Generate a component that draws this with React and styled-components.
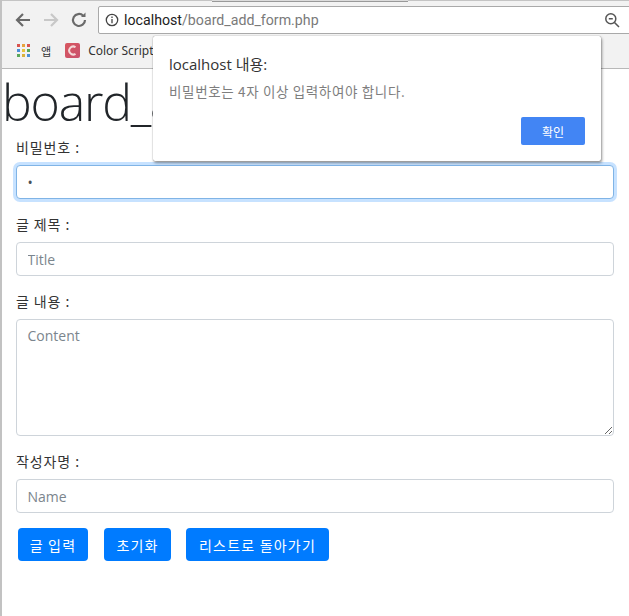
import React from "react";
import styled, { createGlobalStyle } from "styled-components";

const Global = createGlobalStyle`
  html, body { margin: 0; padding: 0; background: #fff; }
  body { width: 629px; height: 616px; overflow: hidden; font-family: "Open Sans", "Noto Sans CJK KR", sans-serif; }
  * { box-sizing: border-box; }
`;

const Shell = styled.div`
  position: relative;
  width: 629px;
  height: 616px;
  overflow: hidden;
  background: #fff;
  border-left: 2px solid #c2c2c2;
`;
const Toolbar = styled.div`
  height: 36px;
  background: #f2f2f2;
  display: flex;
  align-items: center;
  padding: 3px 0 0 12px;
  gap: 10px;
  border-top: 1px solid #c4c4c4;
`;
const NavButton = styled.svg`
  width: 18px;
  height: 18px;
  flex: none;
  fill: none;
  stroke: ${p => (p.$off ? "#c8c8c8" : "#6a6a6a")};
  stroke-width: 2.2;
`;
const Address = styled.div`
  width: 545px;
  height: 28px;
  flex: none;
  background: #fff;
  border: 1px solid #a9a9a9;
  border-radius: 2px;
  display: flex;
  align-items: center;
  padding: 0 22px 0 6px;
  font: 14.2px "Roboto", sans-serif;
  color: #7a7a7a;
`;
const Host = styled.span`
  color: #222;
`;
const Url = styled.span`
  margin-left: 5px;
  flex: 1;
`;
const Bookmarks = styled.div`
  height: 33px;
  background: #f2f2f2;
  border-bottom: 1px solid #b8b8b8;
  display: flex;
  align-items: center;
  padding: 0 0 3px 15px;
  font: 12px "Noto Sans", "Noto Sans CJK KR", sans-serif;
  color: #333;
`;
const AppsLabel = styled.span`
  margin-left: 11px;
  font-size: 11px;
`;
const Favicon = styled.div`
  width: 15px;
  height: 15px;
  margin-left: 14px;
  background: linear-gradient(135deg, #d8575f, #c9516e);
  border-radius: 2px;
  display: flex;
  align-items: center;
  justify-content: center;
`;
const BookmarkName = styled.span`
  margin-left: 8px;
  white-space: nowrap;
`;
const Page = styled.main`
  padding: 0 14px;
`;
const Title = styled.h1`
  margin: 0 0 0 -14px;
  height: 71px;
  font: 300 50px/66px "Open Sans", sans-serif;
  letter-spacing: -1.2px;
  color: #212529;
  white-space: nowrap;
`;
const Field = styled.div`
  display: flex;
  flex-direction: column;
  margin-bottom: 18px;
`;
const Label = styled.label`
  font: 14px/19px "Noto Sans CJK KR", sans-serif;
  color: #333;
  letter-spacing: 0.9px;
  height: 27px;
  margin-top: -2px;
`;
const Input = styled.input`
  width: 598px;
  height: 34px;
  padding: 0 10.5px;
  border: 1px solid ${p => (p.$focus ? "#80b4e6" : "#ced4da")};
  border-radius: 4px;
  font: 14px "Open Sans", sans-serif;
  color: #495057;
  outline: none;
  background: #fff;
  box-shadow: ${p => (p.$focus ? "0 0 0 3px rgba(0,123,255,.22)" : "none")};
  &::placeholder { color: #7b858d; opacity: 1; }
`;
const Area = styled.textarea`
  width: 598px;
  height: 117px;
  padding: 6px 10.5px;
  border: 1px solid #ced4da;
  border-radius: 4px;
  font: 14px "Open Sans", sans-serif;
  color: #495057;
  outline: none;
  display: block;
  &::placeholder { color: #7b858d; opacity: 1; }
`;
const Actions = styled.div`
  display: flex;
  margin-left: 2px;
  margin-top: -3px;
`;
const Button = styled.button`
  height: 33px;
  width: ${p => p.$w}px;
  margin-right: ${p => p.$gap}px;
  border: 0;
  border-radius: 4px;
  background: #007bff;
  color: #fff;
  font: 14px "Noto Sans CJK KR", sans-serif;
  letter-spacing: 1.2px;
  padding: 0;
`;
const Dialog = styled.div`
  position: absolute;
  left: 151px;
  top: 36px;
  width: 448px;
  height: 125px;
  background: #fff;
  border-radius: 2px;
  box-shadow: 0 0 1px rgba(0,0,0,.55), 1px 2px 3px rgba(0,0,0,.4);
  padding: 18px 16px 0 16px;
  display: flex;
  flex-direction: column;
`;
const DialogTitle = styled.div`
  font: 15px/20px "Open Sans", "Noto Sans CJK KR", sans-serif;
  color: #333;
`;
const DialogText = styled.div`
  margin-top: 8px;
  font: 13.5px/18px "Noto Sans CJK KR", sans-serif;
  letter-spacing: 0.65px;
  color: #7e7e7e;
`;
const DialogActions = styled.div`
  display: flex;
  justify-content: flex-end;
  margin-top: 17px;
`;
const Confirm = styled.button`
  width: 64px;
  height: 28px;
  border: 0;
  border-radius: 2px;
  background: #4285f4;
  color: #fff;
  font: 12px "Noto Sans CJK KR", sans-serif;
  padding: 0;
`;
const TabStub = styled.div`
  position: absolute;
  left: 210px;
  top: 0;
  width: 196px;
  height: 2px;
  background: #dcdcdc;
  border-bottom: 1px solid #999;
`;

const dots = ["#d9534f","#e8a33d","#d9534f","#4a90d9","#e8c33d","#5aa85a","#5aa85a","#d9b13d","#4a90d9"];
const AppsGrid = styled.div`
  display: grid;
  grid-template-columns: repeat(3, 3px);
  grid-auto-rows: 3px;
  gap: 2px;
`;
const Dot = styled.i`
  display: block;
  background: ${p => p.$c};
`;

export default function App() {
  return (
    <Shell>
      <Global />
      <TabStub />
      <Toolbar>
        <NavButton viewBox="0 0 18 18"><path d="M16 9H3M9 3 3 9l6 6" /></NavButton>
        <NavButton $off viewBox="0 0 18 18"><path d="M2 9h13M9 3l6 6-6 6" /></NavButton>
        <NavButton viewBox="0 0 18 18"><path d="M15 9a6 6 0 1 1-1.8-4.3" /><path d="M15.5 1.5V6H11" fill="#6a6a6a" stroke="none" /></NavButton>
        <Address>
          <svg width="14" height="14" viewBox="0 0 14 14" fill="none" stroke="#444" strokeWidth="1.3"><circle cx="7" cy="7" r="5.7" /><path d="M7 6v4.2M7 3.6v1.3" /></svg>
          <Url><Host>localhost</Host>/board_add_form.php</Url>
          <svg width="16" height="16" viewBox="0 0 16 16" fill="none" stroke="#555" strokeWidth="1.5"><circle cx="6.8" cy="6.8" r="5" /><path d="M10.5 10.5 15 15M4.8 6.8h4" /></svg>
        </Address>
      </Toolbar>
      <Bookmarks>
        <AppsGrid>{dots.map((c, i) => <Dot key={i} $c={c} />)}</AppsGrid>
        <AppsLabel>앱</AppsLabel>
        <Favicon>
          <svg width="11" height="11" viewBox="0 0 11 11" fill="none" stroke="#f4d9d9" strokeWidth="2"><path d="M8.5 2.2A4 4 0 1 0 8.5 8.8" /></svg>
        </Favicon>
        <BookmarkName>Color Scripter</BookmarkName>
      </Bookmarks>
      <Page>
        <Title>board_add_form</Title>
        <Field>
          <Label>비밀번호 :</Label>
          <Input $focus type="password" defaultValue="1" />
        </Field>
        <Field>
          <Label>글 제목 :</Label>
          <Input placeholder="Title" />
        </Field>
        <Field>
          <Label>글 내용 :</Label>
          <Area placeholder="Content" />
        </Field>
        <Field>
          <Label>작성자명 :</Label>
          <Input placeholder="Name" />
        </Field>
        <Actions>
          <Button $w={70} $gap={16}>글 입력</Button>
          <Button $w={67} $gap={15}>초기화</Button>
          <Button $w={143} $gap={0}>리스트로 돌아가기</Button>
        </Actions>
      </Page>
      <Dialog>
        <DialogTitle>localhost 내용:</DialogTitle>
        <DialogText>비밀번호는 4자 이상 입력하여야 합니다.</DialogText>
        <DialogActions><Confirm>확인</Confirm></DialogActions>
      </Dialog>
    </Shell>
  );
}
